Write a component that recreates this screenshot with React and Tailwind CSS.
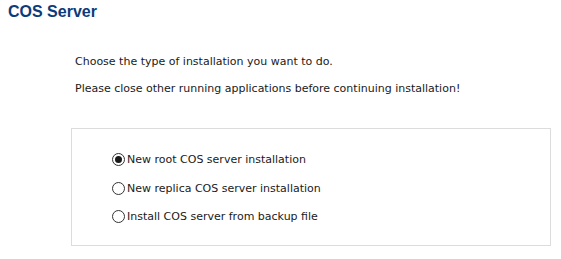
import React, { useState } from 'react';

const options = [
  'New root COS server installation',
  'New replica COS server installation',
  'Install COS server from backup file',
];

function Radio({ checked }) {
  return (
    <span className="w-[13px] h-[13px] rounded-full border border-[#333333] bg-white flex items-center justify-center shrink-0">
      {checked && <span className="w-[7px] h-[7px] rounded-full bg-[#1a1a1a]" />}
    </span>
  );
}

export default function App() {
  const [selected, setSelected] = useState(0);

  return (
    <div className="w-[561px] h-[259px] bg-white overflow-hidden" style={{ fontFamily: '"DejaVu Sans", sans-serif' }}>
      {/* Header */}
      <h1
        className="pl-[8px] pt-[4px] text-[16px] leading-[16px] font-bold text-[#0d3b7a]"
        style={{ fontFamily: '"Liberation Sans", Arial, sans-serif' }}
      >
        COS Server
      </h1>

      {/* Intro text */}
      <div className="pl-[75px] pt-[35px] text-[11px] text-[#1a1a1a] flex flex-col gap-[14px] leading-[13px]">
        <p>Choose the type of installation you want to do.</p>
        <p>Please close other running applications before continuing installation!</p>
      </div>

      {/* Options box */}
      <div className="ml-[71px] mt-[33px] w-[480px] h-[118px] border border-[#dcdcdc] pl-[40px] pt-[24px] flex flex-col gap-[15.5px]">
        {options.map((label, i) => (
          <label
            key={label}
            className="flex items-center gap-[2px] text-[11px] leading-[13px] text-[#1a1a1a] cursor-pointer"
            onClick={() => setSelected(i)}
          >
            <Radio checked={selected === i} />
            <span>{label}</span>
          </label>
        ))}
      </div>
    </div>
  );
}
